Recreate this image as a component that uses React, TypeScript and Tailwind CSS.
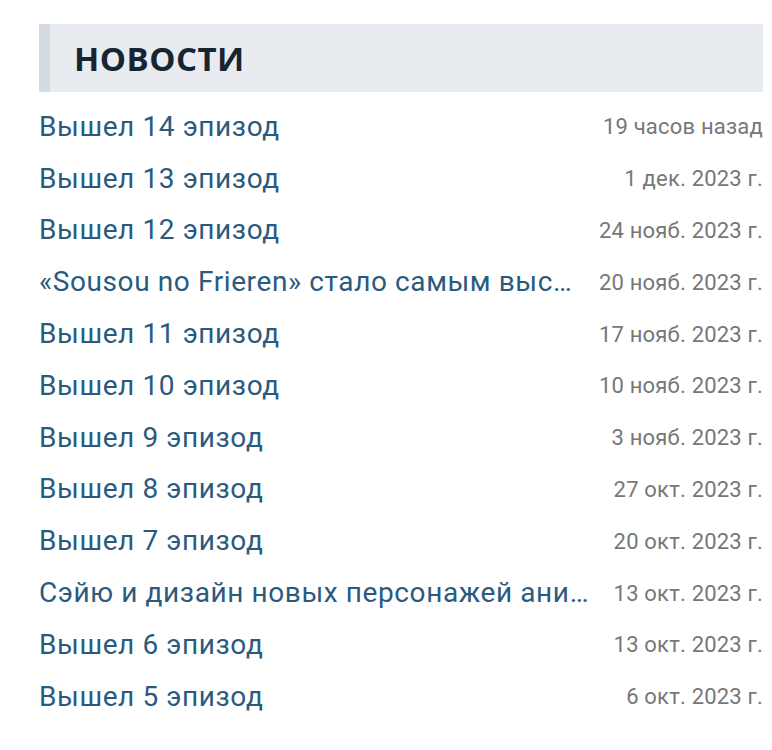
import React from "react";

const items: [string, string][] = [
  ["Вышел 14 эпизод", "19 часов назад"],
  ["Вышел 13 эпизод", "1 дек. 2023 г."],
  ["Вышел 12 эпизод", "24 нояб. 2023 г."],
  ["«Sousou no Frieren» стало самым высокооцененным аниме на MyAnimeList", "20 нояб. 2023 г."],
  ["Вышел 11 эпизод", "17 нояб. 2023 г."],
  ["Вышел 10 эпизод", "10 нояб. 2023 г."],
  ["Вышел 9 эпизод", "3 нояб. 2023 г."],
  ["Вышел 8 эпизод", "27 окт. 2023 г."],
  ["Вышел 7 эпизод", "20 окт. 2023 г."],
  ["Сэйю и дизайн новых персонажей аниме второго сезона", "13 окт. 2023 г."],
  ["Вышел 6 эпизод", "13 окт. 2023 г."],
  ["Вышел 5 эпизод", "6 окт. 2023 г."],
];

export default function App() {
  return (
    <div className="w-[772px] h-[750px] bg-white pt-[24px] pl-[39px] pr-[9px]">
      <div className="h-[68px] bg-[#e8ecf1] border-l-[11px] border-[#d3dae1] flex items-center pl-[24px]">
        <h2
          className="text-[33px] font-bold text-[#172432] leading-none tracking-[0.5px]"
          style={{ fontFamily: '"Open Sans", sans-serif' }}
        >
          НОВОСТИ
        </h2>
      </div>
      <ul className="mt-[9px]" style={{ fontFamily: "Roboto, sans-serif" }}>
        {items.map(([t, d], i) => (
          <li key={i} className="h-[51.8px] flex items-center gap-6">
            <span className="flex-1 min-w-0 truncate text-[28px] tracking-[0.6px] text-[#2a5a7e]">{t}</span>
            <span className="shrink-0 text-[22px] tracking-[0.2px] text-[#777777]">{d}</span>
          </li>
        ))}
      </ul>
    </div>
  );
}
